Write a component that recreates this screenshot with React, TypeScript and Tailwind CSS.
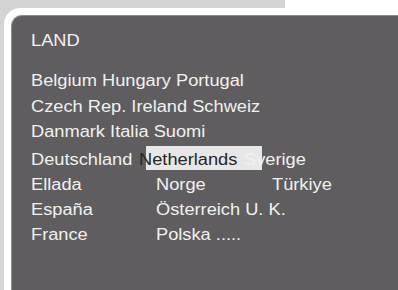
import React from "react";

const T = ({ children, dark }: { children: React.ReactNode; dark?: boolean }) => (
  <span
    className={
      "inline-block origin-left scale-x-[1.14] whitespace-nowrap " +
      (dark ? "text-[#262626]" : "text-[#f1f1f1]")
    }
  >
    {children}
  </span>
);

export default function App() {
  return (
    <div
      className="w-[398px] h-[290px] overflow-hidden bg-[#d4d4d4] flex flex-col"
      style={{ fontFamily: '"Liberation Sans", Arial, sans-serif' }}
    >
      <div className="h-[8px] flex shrink-0">
        <div className="w-[285px] bg-[#d4d4d4]" />
        <div className="flex-1 bg-white" />
      </div>
      <div className="flex-1 flex">
        <div className="w-[4px] shrink-0" />
        <div className="flex-1 bg-white rounded-tl-[16px] pl-[7px] pt-[7px] flex">
          <div className="flex-1 bg-[#5f5d5f] rounded-tl-[11px] border-l border-t border-[#8c8c8c] pl-[19px] pt-[12px] text-[16px] leading-[25px]">
            <div className="h-[40px]">
              <T>LAND</T>
            </div>
            <div className="h-[25.5px]">
              <T>Belgium Hungary Portugal</T>
            </div>
            <div className="h-[25.5px]">
              <T>Czech Rep. Ireland Schweiz</T>
            </div>
            <div className="h-[27.5px]">
              <T>Danmark Italia Suomi</T>
            </div>
            <div className="h-[25.5px] relative flex">
              <div className="absolute left-[115px] -top-[1px] w-[116px] h-[24px] bg-[#e7e7e7]" />
              <div className="w-[108px] relative">
                <T>Deutschland</T>
              </div>
              <div className="w-[105px] relative">
                <T dark>Netherlands</T>
              </div>
              <div className="relative">
                <T>Sverige</T>
              </div>
            </div>
            <div className="h-[25px] flex">
              <div className="w-[125px]">
                <T>Ellada</T>
              </div>
              <div className="w-[116px]">
                <T>Norge</T>
              </div>
              <div>
                <T>Türkiye</T>
              </div>
            </div>
            <div className="h-[25px] flex">
              <div className="w-[125px]">
                <T>España</T>
              </div>
              <div>
                <T>Österreich U. K.</T>
              </div>
            </div>
            <div className="h-[25px] flex">
              <div className="w-[125px]">
                <T>France</T>
              </div>
              <div>
                <T>Polska .....</T>
              </div>
            </div>
          </div>
        </div>
      </div>
    </div>
  );
}
